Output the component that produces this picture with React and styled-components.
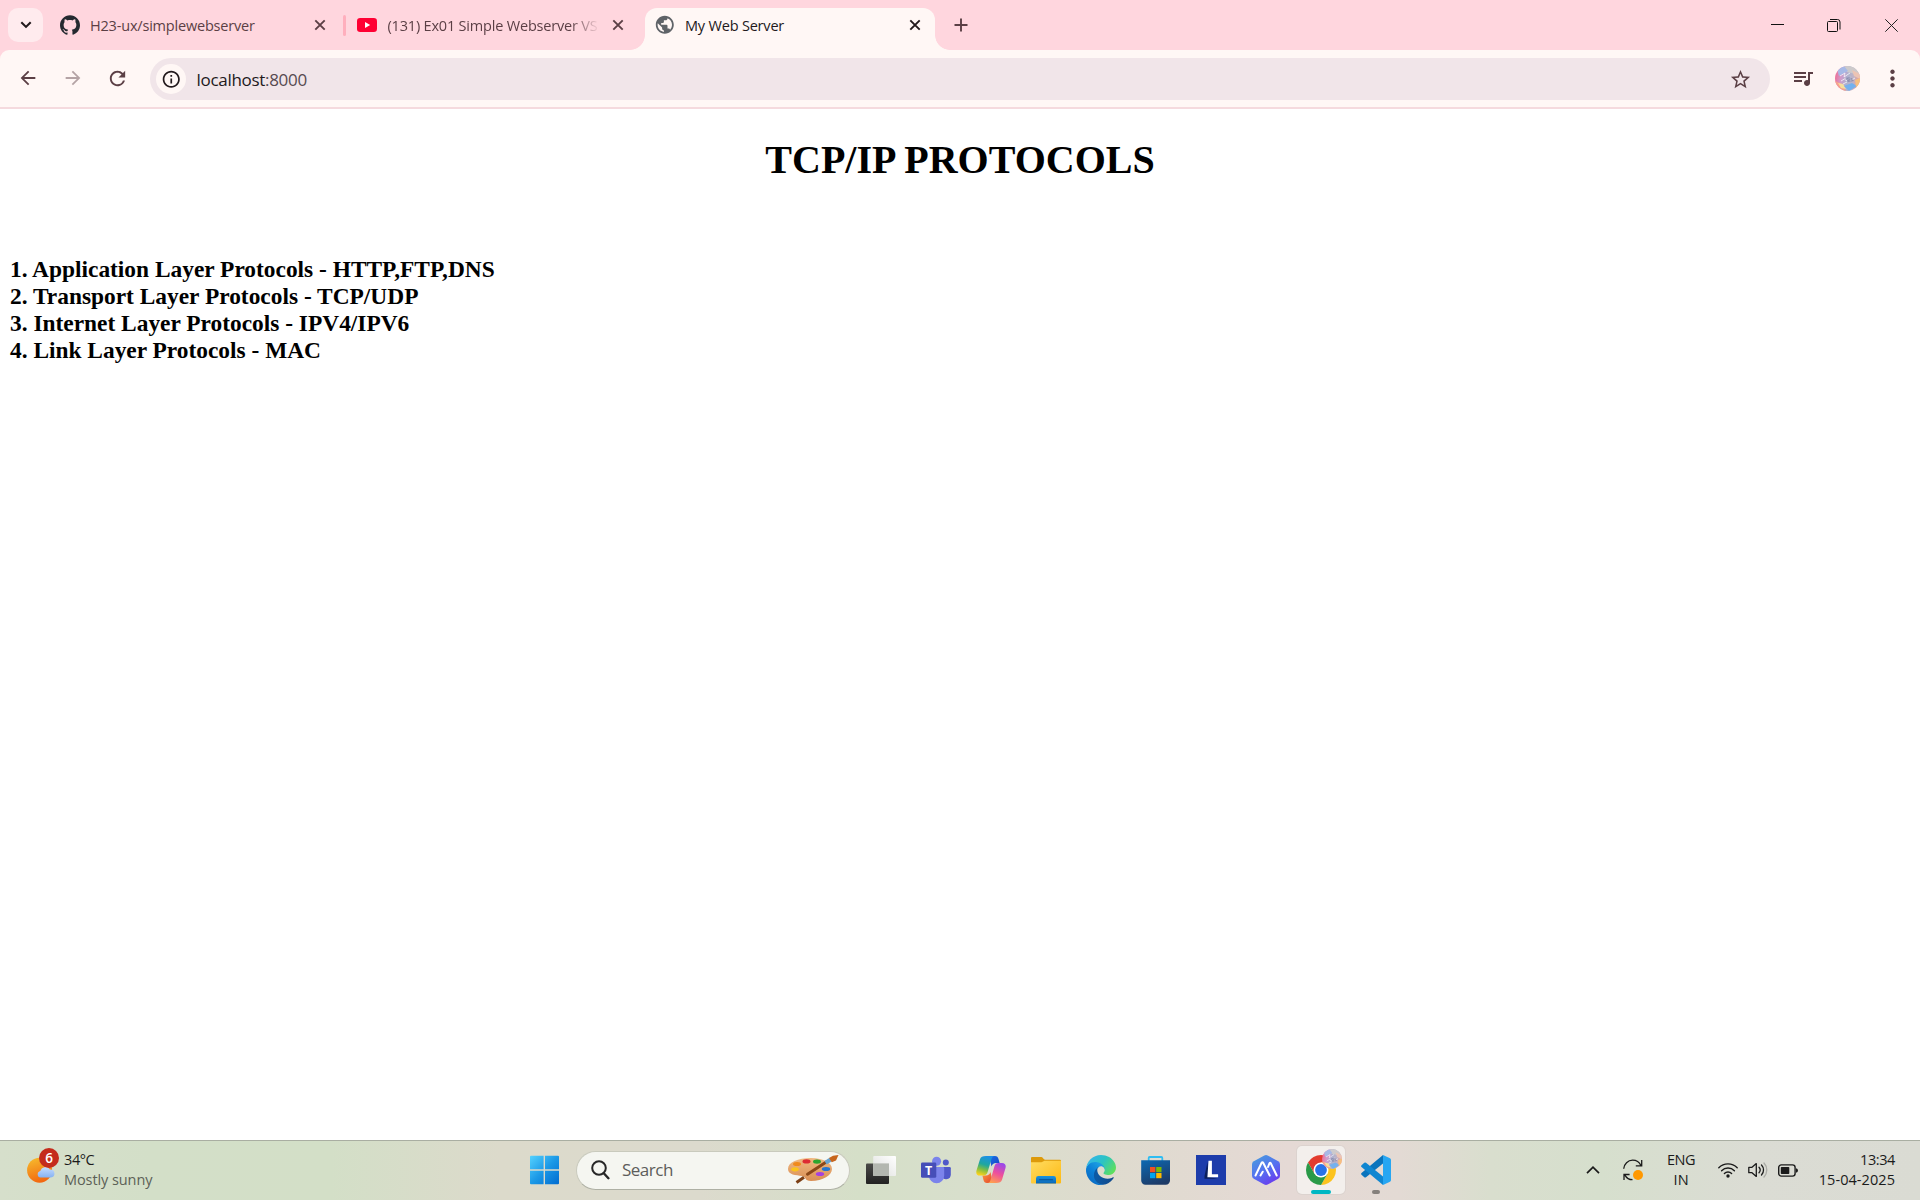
import React from "react";
import styled, { createGlobalStyle, css } from "styled-components";
import { SiGithub } from "react-icons/si";
import {
  MdPublic,
  MdArrowBack,
  MdArrowForward,
  MdRefresh,
  MdInfoOutline,
  MdStarBorder,
  MdQueueMusic,
  MdMoreVert,
} from "react-icons/md";

const colors = {
  frame: "#ffd6de",
  toolbar: "#fff7f5",
  omnibox: "#f1e5e9",
  ink: "#5b3f45",
  dark: "#22191c",
};

const ui = css`
  font-family: "Open Sans", "Noto Sans", sans-serif;
  white-space: nowrap;
`;

const GlobalStyle = createGlobalStyle`
  *, *::before, *::after { box-sizing: border-box; }
  body { margin: 0; background: #fff; overflow: hidden; }
  svg { display: block; flex: none; }
`;

const Screen = styled.div`
  display: flex;
  flex-direction: column;
  width: 1920px;
  height: 1200px;
`;

/* ---------- browser frame ---------- */

const TabStrip = styled.div`
  display: flex;
  align-items: center;
  height: 50px;
  padding-left: 8px;
  background: ${colors.frame};
`;

const TabSearch = styled.div`
  display: flex;
  align-items: center;
  justify-content: center;
  width: 35px;
  height: 34px;
  margin-right: 5px;
  border-radius: 10px;
  background: #ffebee;
`;

const Tab = styled.div`
  position: relative;
  display: flex;
  align-items: center;
  align-self: flex-end;
  width: ${(p) => p.$width}px;
  height: 42.5px;
  padding: 0 ${(p) => p.$right}px 7.5px ${(p) => p.$left}px;
  color: ${(p) => (p.$active ? colors.dark : colors.ink)};

  ${(p) =>
    p.$active &&
    css`
      background: ${colors.toolbar};
      border-radius: 12px 12px 0 0;

      &::before,
      &::after {
        content: "";
        position: absolute;
        bottom: 0;
        width: 15px;
        height: 15px;
      }
      &::before {
        right: 100%;
        background: radial-gradient(circle at 0 0, transparent 14.5px, ${colors.toolbar} 15.2px);
      }
      &::after {
        left: 100%;
        background: radial-gradient(circle at 100% 0, transparent 14.5px, ${colors.toolbar} 15.2px);
      }
    `}
`;

const Favicon = styled.div`
  display: flex;
  align-items: center;
  justify-content: center;
  width: ${(p) => p.$size}px;
  height: 20px;
`;

const TabTitle = styled.div`
  ${ui}
  flex: 1;
  min-width: 0;
  margin: 2px ${(p) => (p.$fade ? 2 : 10)}px 0 ${(p) => p.$gap}px;
  font-size: 14.5px;
  line-height: 20px;
  letter-spacing: -0.19px;
  ${(p) =>
    p.$fade &&
    css`
      mask-image: linear-gradient(90deg, #000 calc(100% - 36px), transparent calc(100% - 6px));
    `}
`;

const Separator = styled.div`
  width: 3px;
  height: 21px;
  border-radius: 2px;
  background: #ffafbd;
`;

const NewTab = styled.div`
  display: flex;
  justify-content: center;
  width: 52px;
`;

const WindowControls = styled.div`
  display: flex;
  gap: 43.5px;
  margin-left: auto;
  padding-right: 22.5px;
`;

const ToolbarFrame = styled.div`
  background: ${colors.frame};
`;

const Toolbar = styled.div`
  display: flex;
  align-items: center;
  height: 59px;
  padding: 0 4px 1px 15px;
  border-bottom: 2px solid #f5dade;
  border-radius: 9px 9px 0 0;
  background: ${colors.toolbar};
`;

const ToolButton = styled.div`
  display: flex;
  align-items: center;
  justify-content: center;
  width: 45px;
  color: ${colors.ink};
  opacity: ${(p) => (p.$disabled ? 0.45 : 1)};
`;

const NavGroup = styled.div`
  display: flex;
  width: 135px;
  margin-left: -10px;
`;

const Omnibox = styled.div`
  display: flex;
  align-items: center;
  flex: none;
  width: 1620px;
  height: 42px;
  margin-left: 10px;
  margin-top: 2px;
  padding: 0 18px 0 6px;
  border-radius: 21px;
  background: ${colors.omnibox};
`;

const SiteInfo = styled.div`
  display: flex;
  align-items: center;
  justify-content: center;
  width: 30px;
  height: 30px;
  border-radius: 50%;
  color: ${colors.dark};
  background: ${colors.toolbar};
`;

const Address = styled.div`
  ${ui}
  flex: 1;
  margin-left: 10.5px;
  padding-top: 1px;
  font-size: 17px;
  line-height: 24px;
  letter-spacing: -0.3px;
  color: ${colors.dark};
`;

const Port = styled.span`
  color: #574a50;
`;

const Actions = styled.div`
  display: flex;
  align-items: center;
  margin-left: 10px;
`;

/* ---------- web page ---------- */

const Page = styled.main`
  flex: 1;
  padding: 27.5px 10px 0;
  background: #fff;
  color: #000;
  font-family: "Liberation Serif", "Times New Roman", serif;
`;

const Heading = styled.h1`
  margin: 0;
  font-size: 40px;
  line-height: 46px;
  text-align: center;
`;

const Protocols = styled.h3`
  margin: 73.5px 0 0;
  font-size: 23.4px;
  line-height: 27px;
`;

/* ---------- taskbar ---------- */

const Taskbar = styled.footer`
  display: flex;
  align-items: center;
  height: 60px;
  padding-bottom: 1px;
  border-top: 1px solid #a9aea2;
  background: linear-gradient(
    90deg,
    #d6dfcb 0,
    #d3dfc8 150px,
    #d3dfc7 330px,
    #dcdacb 500px,
    #dcdacd 700px,
    #d5dfc8 860px,
    #d8dfcc 960px,
    #dedbce 1100px,
    #e5d9d5 1290px,
    #e3dad4 1400px,
    #d9dece 1490px,
    #d6dfcd 1600px,
    #dbdcd4 1750px,
    #dadbd3 1920px
  );
`;

const Weather = styled.div`
  display: flex;
  align-items: center;
  width: 530px;
  padding-left: 27px;
`;

const WeatherIcon = styled.div`
  position: relative;
  width: 32px;
  height: 36px;
  margin-right: 5px;
  margin-top: -9px;
`;

const Badge = styled.div`
  ${ui}
  position: absolute;
  top: 0;
  right: 0;
  width: 20px;
  height: 20px;
  border-radius: 50%;
  background: #c42b1c;
  color: #fff;
  font-size: 13.5px;
  font-weight: 600;
  line-height: 20px;
  text-align: center;
`;

const Lines = styled.div`
  ${ui}
  font-size: 14.5px;
  line-height: 20px;
  color: #1b1b1b;
  text-align: ${(p) => p.$align || "left"};
`;

const Line = styled.div`
  letter-spacing: ${(p) => p.$spacing || 0}px;
  color: ${(p) => (p.$muted ? "#5c6157" : "inherit")};
`;

const SearchBox = styled.div`
  ${ui}
  display: flex;
  align-items: center;
  width: 274px;
  height: 39px;
  margin: 0 3.5px 0 16px;
  padding: 0 10px 0 14px;
  border: 1px solid #c9cabd;
  border-bottom-color: #aeb0a4;
  border-radius: 20px;
  background: #f5f6f1;
  color: #5d5d5b;
  font-size: 17px;
  line-height: 24px;
  letter-spacing: -0.5px;
`;

const SearchLabel = styled.span`
  flex: 1;
  margin-left: 12px;
`;

const AppSlot = styled.div`
  display: flex;
  justify-content: center;
  width: 55px;
`;

const AppButton = styled.div`
  position: relative;
  display: flex;
  align-items: center;
  justify-content: center;
  width: 48px;
  height: 48px;
  border-radius: 5px;
  ${(p) =>
    p.$focused &&
    css`
      background: #f3efec;
      box-shadow: 0 0 0 1px #dcd3cf;
    `}
`;

const Indicator = styled.div`
  position: absolute;
  bottom: 0;
  left: 50%;
  width: ${(p) => (p.$focused ? 20 : 8)}px;
  height: 4px;
  border-radius: 2px;
  background: ${(p) => (p.$focused ? "#00b7c3" : "#85807c")};
  transform: translateX(-50%);
`;

const ProfileBadge = styled.div`
  position: absolute;
  top: 3px;
  right: 3px;
`;

const Tray = styled.div`
  display: flex;
  align-items: center;
  margin-left: auto;
  padding-right: 25px;
`;

const TrayItem = styled.div`
  margin-right: ${(p) => p.$after}px;
`;

/* ---------- drawings ---------- */

const Cross = ({ color }) => (
  <svg width="20" height="20" viewBox="0 0 20 20">
    <path d="M5.3 5.3l9.4 9.4M14.7 5.3l-9.4 9.4" stroke={color} strokeWidth="1.9" />
  </svg>
);

const YouTubeIcon = () => (
  <svg width="20" height="14" viewBox="0 0 20 14">
    <rect width="20" height="14" rx="3.2" fill="#ff0033" />
    <path d="M8 4l5.2 3L8 10z" fill="#fff" />
  </svg>
);

const Avatar = ({ size, id }) => (
  <svg width={size} height={size} viewBox="0 0 25 25">
    <defs>
      <linearGradient id={`${id}-base`} x1="0" y1=".4" x2="1" y2=".6">
        <stop offset="0" stopColor="#ee6f98" />
        <stop offset=".25" stopColor="#cf9ccb" />
        <stop offset=".5" stopColor="#adb2cf" />
        <stop offset=".75" stopColor="#c3b3c4" />
        <stop offset="1" stopColor="#f0988a" />
      </linearGradient>
      <clipPath id={`${id}-clip`}>
        <circle cx="12.5" cy="12.5" r="12.5" />
      </clipPath>
    </defs>
    <g clipPath={`url(#${id}-clip)`}>
      <rect width="25" height="25" fill={`url(#${id}-base)`} />
      <path d="M9 0h16v9L12 6z" fill="#cdcacb" />
      <path d="M2 3l7-3 4 5-9 5z" fill="#a7b9e6" />
      <path d="M17 4l8 4v5l-6-3z" fill="#ecc4b4" />
      <path d="M0 15l7 3 4 7H0z" fill="#f7a08e" />
      <path d="M3 17l5 1 3 5-5-1z" fill="#f6df9d" />
      <path d="M9 20l8-3 5 3-8 5z" fill="#74b1ee" />
      <path d="M20 14l5-2v7l-4 2z" fill="#f6c07f" />
      <path
        d="M5 10l5-3-1 4 6-4M6 15l5-3 0 3 5-4-1 4 5-3M8 18l4-2"
        fill="none"
        stroke="#fff"
        strokeOpacity=".7"
        strokeWidth="1"
      />
      <path d="M10 12l6-1 3 4-6 1z" fill="#5f6390" fillOpacity=".45" />
    </g>
  </svg>
);

const WeatherDrawing = () => (
  <svg width="32" height="36" viewBox="0 0 32 36">
    <defs>
      <linearGradient id="sun" x1=".3" y1="0" x2=".6" y2="1">
        <stop offset="0" stopColor="#f6b82c" />
        <stop offset="1" stopColor="#f2640f" />
      </linearGradient>
      <linearGradient id="cloud" x1="0" y1="0" x2="0" y2="1">
        <stop offset="0" stopColor="#c5dcff" />
        <stop offset="1" stopColor="#86b2f2" />
      </linearGradient>
    </defs>
    <circle cx="12.6" cy="22.2" r="12.5" fill="url(#sun)" />
    <path
      d="M13.600 29.600a3.300 3.300 0 0 1-.3-6.500 5.300 5.300 0 0 1 9.600-1.600 4 4 0 1 1 .9 8.100z"
      fill="url(#cloud)"
    />
  </svg>
);

const WindowsLogo = () => (
  <svg width="30" height="30" viewBox="0 0 30 30">
    <defs>
      <linearGradient id="win" gradientUnits="userSpaceOnUse" x1="0" y1="0" x2="30" y2="30">
        <stop offset="0" stopColor="#55d3ff" />
        <stop offset=".5" stopColor="#1b98e6" />
        <stop offset="1" stopColor="#0069cf" />
      </linearGradient>
    </defs>
    <path
      d="M1 .8h12.600v13.500H0V1.800a1 1 0 0 1 1-1zM15 .8h13a1 1 0 0 1 1 1v12.500H15zM0 15.700h13.600v13.600H1a1 1 0 0 1-1-1zM15 15.700h14v12.600a1 1 0 0 1-1 1H15z"
      fill="url(#win)"
    />
  </svg>
);

const Magnifier = () => (
  <svg width="19" height="20" viewBox="0 0 19 20">
    <circle cx="8" cy="8" r="6.800" fill="none" stroke="#272727" strokeWidth="2" />
    <path d="M12.800 13.200l4.600 5" stroke="#272727" strokeWidth="2.400" strokeLinecap="round" />
  </svg>
);

const Palette = () => (
  <svg width="52" height="30" viewBox="0 0 52 30">
    <defs>
      <linearGradient id="wood" x1="0" y1="0" x2="0" y2="1">
        <stop offset="0" stopColor="#f0b981" />
        <stop offset="1" stopColor="#d98f55" />
      </linearGradient>
    </defs>
    <path
      d="M1 14C1 7 11 3 24 3s21 5 21 11-9 12-21 12c-7 0-4-4-9-5C9 20 1 20 1 14z"
      fill="url(#wood)"
    />
    <ellipse cx="10" cy="9" rx="4" ry="2.100" fill="#f08a1c" />
    <ellipse cx="19.500" cy="6.400" rx="4" ry="2.100" fill="#dd2b32" />
    <ellipse cx="30" cy="6.600" rx="4" ry="2.200" fill="#2ba52f" />
    <ellipse cx="8" cy="14.300" rx="3.800" ry="2.100" fill="#fbc31c" />
    <ellipse cx="39" cy="14" rx="4.200" ry="2.100" fill="#2676cf" />
    <ellipse cx="33" cy="19" rx="4.200" ry="2.100" fill="#a440e0" />
    <path d="M9.500 27.500L17 22.300" stroke="#7c3f16" strokeWidth="3" />
    <path d="M20.500 19.200L40 6.500" stroke="#8a4719" strokeWidth="3" strokeLinecap="round" />
    <path d="M37.500 6l5-3.200 2.800 3.200-5.600 3.500z" fill="#6aa4cf" />
    <path d="M42 3l4-2.200L51.500 0 49 5.500l-4.200 1.800z" fill="#c7651d" />
  </svg>
);

const TaskView = () => (
  <svg width="30" height="30" viewBox="0 0 30 30">
    <defs>
      <linearGradient id="tv" x1="0" y1="0" x2="0" y2="1">
        <stop offset="0" stopColor="#4a4a48" />
        <stop offset="1" stopColor="#222" />
      </linearGradient>
      <linearGradient id="tw" x1="1" y1="0" x2="0" y2="1">
        <stop offset="0" stopColor="#fff" />
        <stop offset="1" stopColor="#dcdedb" />
      </linearGradient>
    </defs>
    <rect x="0" y="8.400" width="23" height="20.600" rx="1" fill="url(#tv)" />
    <rect x="7.200" y="1" width="22.800" height="20" rx="1" fill="url(#tw)" />
    <rect x="7.200" y="8.400" width="15.800" height="12.600" fill="#b3b7b0" />
  </svg>
);

const TeamsLetter = styled.span`
  ${ui}
  position: absolute;
  left: 9px;
  top: 15.500px;
  width: 15px;
  color: #fff;
  font-size: 12.500px;
  font-weight: 700;
  line-height: 17px;
  text-align: center;
`;

const Teams = () => (
  <>
    <svg width="30" height="30" viewBox="0 0 30 30">
      <circle cx="24.800" cy="7.400" r="3" fill="#5059c9" />
      <path d="M21 12h7.600a1.200 1.200 0 0 1 1.200 1.200v6.300a4.800 4.800 0 0 1-8.800 2.600z" fill="#5059c9" />
      <circle cx="15.600" cy="6.300" r="4.500" fill="#7b83eb" />
      <path d="M9 12h13a1.200 1.200 0 0 1 1.200 1.200v7.500a7.600 7.600 0 0 1-15.200 0z" fill="#7b83eb" />
      <rect x="0" y="7.600" width="15.300" height="15.200" rx="1.400" fill="#464eb8" />
    </svg>
    <TeamsLetter>T</TeamsLetter>
  </>
);

const Copilot = () => (
  <svg width="30" height="30" viewBox="0 0 30 30">
    <defs>
      <linearGradient id="cpA" x1=".6" y1="0" x2=".3" y2="1">
        <stop offset="0" stopColor="#1b8fe8" />
        <stop offset=".45" stopColor="#1fa79f" />
        <stop offset=".7" stopColor="#7dbd45" />
        <stop offset="1" stopColor="#fbd21a" />
      </linearGradient>
      <linearGradient id="cpB" x1=".7" y1="0" x2=".3" y2="1">
        <stop offset="0" stopColor="#9a48ea" />
        <stop offset=".5" stopColor="#ee4f9c" />
        <stop offset="1" stopColor="#ffa04f" />
      </linearGradient>
      <linearGradient id="cpC" x1="0" y1="0" x2="1" y2="1">
        <stop offset="0" stopColor="#1d6fe6" />
        <stop offset="1" stopColor="#1346c4" />
      </linearGradient>
      <linearGradient id="cpD" x1="0" y1="0" x2="1" y2="1">
        <stop offset="0" stopColor="#ff9a3d" />
        <stop offset="1" stopColor="#e0432f" />
      </linearGradient>
    </defs>
    <path d="M13 1h6c2 0 3 1.200 3.500 3L23.600 8H20c-2.500 0-3.800 1.200-4.500 3.500z" fill="url(#cpC)" />
    <path d="M17 28h-6c-2 0-3-1.200-3.500-3L6.400 20.500H10c2.500 0 3.800-1.200 4.500-3.500z" fill="url(#cpD)" />
    <path
      d="M10 1h9c-2 0-3 1.200-3.600 3.300l-3.700 12.500c-.8 2.600-2 3.700-4.200 3.700H4c-3 0-4.300-2-3.500-5L4 4.200C4.700 2 6.500 1 10 1z"
      fill="url(#cpA)"
    />
    <path
      d="M20 28h-9c2 0 3-1.200 3.600-3.300l3.700-13C19.100 9.100 20.300 8 22.500 8H26c3 0 4.300 2 3.500 5L26 24.800c-.7 2.200-2.500 3.200-6 3.200z"
      fill="url(#cpB)"
    />
  </svg>
);

const Folder = () => (
  <svg width="30" height="30" viewBox="0 0 30 30">
    <defs>
      <linearGradient id="fo" x1="0" y1="0" x2="1" y2="1">
        <stop offset="0" stopColor="#ffdc62" />
        <stop offset="1" stopColor="#fdb913" />
      </linearGradient>
      <linearGradient id="fb" x1="0" y1="0" x2="0" y2="1">
        <stop offset="0" stopColor="#1b93de" />
        <stop offset="1" stopColor="#0a67b8" />
      </linearGradient>
    </defs>
    <path d="M1 2h9.500c1.500 0 2 2.800 3.500 2.800h15a1 1 0 0 1 1 1V10H0V3a1 1 0 0 1 1-1z" fill="#dd9a0b" />
    <path d="M0 7.200h10.500l3-1.500H30V27.500a1 1 0 0 1-1 1H1a1 1 0 0 1-1-1z" fill="url(#fo)" />
    <path d="M5 28.500V23.400a2.400 2.400 0 0 1 2.400-2.400h15.200a2.400 2.400 0 0 1 2.400 2.400v5.100z" fill="url(#fb)" />
    <path d="M8.500 24.700h13" stroke="#0a4f94" strokeWidth="1.100" strokeLinecap="round" />
  </svg>
);

const Edge = () => (
  <svg width="30" height="30" viewBox="0 0 256 256">
    <defs>
      <linearGradient id="edA" x1=".2" y1=".5" x2="1" y2=".6">
        <stop offset="0" stopColor="#0c59a4" />
        <stop offset="1" stopColor="#114a8b" />
      </linearGradient>
      <linearGradient id="edB" x1=".9" y1=".3" x2=".4" y2="1">
        <stop offset="0" stopColor="#1b9de2" />
        <stop offset=".5" stopColor="#0b7fd6" />
        <stop offset="1" stopColor="#0a6cc4" />
      </linearGradient>
      <linearGradient id="edC" x1="0" y1=".2" x2="1" y2=".7">
        <stop offset="0" stopColor="#35b4ee" />
        <stop offset=".5" stopColor="#2cc3c4" />
        <stop offset="1" stopColor="#5fe05a" />
      </linearGradient>
    </defs>
    <path
      d="M231 190.500c-3.400 1.800-6.900 3.400-10.500 4.700-11.500 4.300-23.600 6.500-35.900 6.500-47.300 0-88.500-32.500-88.500-74.300.1-11.400 6.400-21.900 16.400-27.300-42.800 1.800-53.800 46.400-53.800 72.500 0 74 68.100 81.400 82.800 81.400 7.900 0 19.800-2.300 27-4.600l1.300-.4c27.600-9.500 51-28.100 66.600-52.800 1.200-1.900.6-4.300-1.200-5.500-1.300-.8-2.900-.9-4.200-.2z"
      fill="url(#edA)"
    />
    <path
      d="M105.700 241.400c-8.900-5.500-16.600-12.800-22.700-21.300-26.300-36-18.400-86.500 17.600-112.800 3.800-2.700 7.700-5.200 11.900-7.200 3.100-1.500 8.400-4.100 15.500-4 10.100.1 19.600 4.900 25.700 13 4 5.400 6.300 11.900 6.400 18.700 0-.2 24.500-79.600-80-79.600-43.900 0-80 41.700-80 78.200-.2 19.300 4 38.500 12.100 56 27.600 58.800 94.800 87.600 156.400 67.100-21.100 6.600-44.100 3.700-62.900-8.100z"
      fill="url(#edB)"
    />
    <path
      d="M152.300 148.900c-.9 1-3.400 2.500-3.400 5.600 0 2.600 1.700 5.200 4.800 7.300 14.300 10 41.400 8.600 41.500 8.600 10.700 0 21.100-2.900 30.300-8.300 18.800-11 30.400-31.100 30.400-52.900.3-22.400-8-37.300-11.300-43.900C223.500 23.900 177.700 0 128 0 58.100 0 1 56.200.2 126.200c.5-36.500 36.800-66 80-66 3.500 0 23.500.3 42 10.100 16.300 8.600 24.900 18.900 30.800 29.200 6.200 10.700 7.300 24.100 7.300 29.500 0 5.300-2.700 13.300-7.800 19.900z"
      fill="url(#edC)"
    />
  </svg>
);

const Store = () => (
  <svg width="30" height="30" viewBox="0 0 30 30">
    <defs>
      <linearGradient id="st" x1=".2" y1="0" x2=".6" y2="1">
        <stop offset="0" stopColor="#0d66ae" />
        <stop offset="1" stopColor="#1d3a66" />
      </linearGradient>
    </defs>
    <path d="M7.700 6V3a1 1 0 0 1 1-1h11.600a1 1 0 0 1 1 1v3" fill="none" stroke="#2fbdf2" strokeWidth="1.800" />
    <path d="M.2 5.200H29V25.500a4.200 4.200 0 0 1-4.200 4.200H4.400a4.200 4.200 0 0 1-4.200-4.200z" fill="url(#st)" />
    <rect x="9" y="12" width="5.300" height="5.200" fill="#f25022" />
    <rect x="15.200" y="12" width="5.300" height="5.200" fill="#7fba00" />
    <rect x="9" y="18" width="5.300" height="5.200" fill="#00a4ef" />
    <rect x="15.200" y="18" width="5.300" height="5.200" fill="#ffb900" />
  </svg>
);

const BlockL = () => (
  <svg width="30" height="30" viewBox="0 0 30 30">
    <rect width="30" height="30" fill="#1d3cab" />
    <path d="M11.500 7L8.500 21v2.800H22L12.500 22z" fill="#0b1f5c" />
    <path d="M12.500 5.800h3.400v13.400h6.200v3H11.400z" fill="#fff" />
  </svg>
);

const Hexagon = () => (
  <svg width="30" height="30" viewBox="0 0 30 30">
    <defs>
      <linearGradient id="hx" x1=".2" y1="0" x2=".8" y2="1">
        <stop offset="0" stopColor="#4a9ade" />
        <stop offset=".5" stopColor="#5570f0" />
        <stop offset="1" stopColor="#6d35ee" />
      </linearGradient>
    </defs>
    <path
      d="M13.300.5q1.700-.9 3.400 0L27.200 6.200Q29 7.200 29 9.200V20.800q0 2-1.800 3L16.700 29.500q-1.700.9-3.400 0L2.800 23.800Q1 22.800 1 20.800V9.200q0-2 1.800-3z"
      fill="url(#hx)"
    />
    <path
      d="M4.500 20.500L10.500 8q.9-1.600 1.800 0L18.700 20.500M9.500 20.500l2.200-3.800M17 12l1.400-3.500q.7-1.400 1.500 0L25.700 20.500"
      fill="none"
      stroke="#fff"
      strokeWidth="2"
      strokeLinecap="round"
    />
  </svg>
);

const Chrome = () => (
  <svg width="30" height="30" viewBox="0 0 30 30">
    <path d="M2.010 7.500A15 15 0 0 1 27.990 7.500H15L8.500 18.750z" fill="#e33b2e" />
    <path d="M27.990 7.500A15 15 0 0 1 15 30l6.500-11.250L15 7.500z" fill="#fcc31e" />
    <path d="M15 30A15 15 0 0 1 2.010 7.500L8.500 18.750h13z" fill="#2a9a48" />
    <circle cx="15" cy="15" r="7.500" fill="#fff" />
    <circle cx="15" cy="15" r="5.900" fill="#2a72e8" />
  </svg>
);

const VSCode = () => (
  <svg width="30" height="30" viewBox="0 0 30 30">
    <path d="M22 0v8.600L5 22.200q-.9.600-1.700 0L.5 19.800q-.8-1 0-1.900z" fill="#0a74bd" />
    <path d="M22 30v-8.600L5 7.800q-.9-.6-1.700 0L.5 10.200q-.8 1 0 1.900z" fill="#0f86d1" />
    <path d="M22 0l7 3.200q1 .6 1 1.800v20q0 1.200-1 1.800L22 30z" fill="#27a6f2" />
  </svg>
);

const SyncIcon = () => (
  <svg width="20" height="22" viewBox="0 0 20 22">
    <g fill="none" stroke="#1b1b1b" strokeWidth="1.300">
      <path d="M.7 9.800C1 5 5 1.200 9.600 1.200c3.800 0 6.800 2 8.300 5.300M18.700 1v5.800h-5.900" />
      <path d="M9.500 20.700c-3.500 0-6-1.700-7.600-4.600M1 21v-5.500h5.600" />
    </g>
    <circle cx="15" cy="16" r="5" fill="#ff9800" />
  </svg>
);

const WifiIcon = () => (
  <svg width="20" height="16" viewBox="0 0 20 16">
    <g fill="none" stroke="#1b1b1b" strokeWidth="1.400" strokeLinecap="round">
      <path d="M.8 5.700a13 13 0 0 1 18.400 0" />
      <path d="M3.600 8.700a9 9 0 0 1 12.800 0" />
      <path d="M6.400 11.500a5.100 5.100 0 0 1 7.200 0" />
    </g>
    <circle cx="10" cy="14" r="1.700" fill="#1b1b1b" />
  </svg>
);

const VolumeIcon = () => (
  <svg width="20" height="16" viewBox="0 0 20 16">
    <g fill="none" stroke="#1b1b1b" strokeWidth="1.300" strokeLinecap="round" strokeLinejoin="round">
      <path d="M.8 5.300H4L8.300 1.600v12.800L4 10.700H.8z" />
      <path d="M11 5.300a4 4 0 0 1 0 5.400M13.500 3a7.200 7.200 0 0 1 0 10" />
      <path d="M16 1a10.200 10.200 0 0 1 0 14" opacity=".25" />
    </g>
  </svg>
);

const BatteryIcon = () => (
  <svg width="20" height="13" viewBox="0 0 20 13">
    <rect x=".7" y=".9" width="16.400" height="11.200" rx="2.600" fill="none" stroke="#1b1b1b" strokeWidth="1.400" />
    <rect x="2.800" y="3" width="8.500" height="7" rx=".8" fill="#1b1b1b" />
    <path d="M18 4.300q2 .3 2 2.200t-2 2.200z" fill="#1b1b1b" />
  </svg>
);

const apps = [
  { name: "taskview", Icon: TaskView },
  { name: "teams", Icon: Teams },
  { name: "copilot", Icon: Copilot },
  { name: "explorer", Icon: Folder },
  { name: "edge", Icon: Edge },
  { name: "store", Icon: Store },
  { name: "l", Icon: BlockL },
  { name: "hexagon", Icon: Hexagon },
  { name: "chrome", Icon: Chrome, focused: true, running: true, profile: true },
  { name: "vscode", Icon: VSCode, running: true },
];

const protocols = [
  "1. Application Layer Protocols - HTTP,FTP,DNS",
  "2. Transport Layer Protocols - TCP/UDP",
  "3. Internet Layer Protocols - IPV4/IPV6",
  "4. Link Layer Protocols - MAC",
];

export default function App() {
  return (
    <Screen>
      <GlobalStyle />
      <TabStrip>
        <TabSearch>
          <svg width="12" height="8" viewBox="0 0 12 8">
            <path d="M1.300 1.300L6 5.900l4.700-4.600" fill="none" stroke={colors.dark} strokeWidth="2.100" />
          </svg>
        </TabSearch>
        <Tab $width={295} $left={12} $right={13}>
          <Favicon $size={20}>
            <SiGithub size={20} color="#24292f" />
          </Favicon>
          <TabTitle $gap={10}>H23-ux/simplewebserver</TabTitle>
          <Cross color={colors.ink} />
        </Tab>
        <Separator />
        <Tab $width={299} $left={11} $right={17.5}>
          <Favicon $size={20}>
            <YouTubeIcon />
          </Favicon>
          <TabTitle $gap={10.5} $fade>
            (131) Ex01 Simple Webserver VS
          </TabTitle>
          <Cross color={colors.ink} />
        </Tab>
        <Tab $width={290} $left={11} $right={10} $active>
          <Favicon $size={18}>
            <MdPublic size={21.6} color="#5f6368" />
          </Favicon>
          <TabTitle $gap={11}>My Web Server</TabTitle>
          <Cross color={colors.dark} />
        </Tab>
        <NewTab>
          <svg width="14" height="14" viewBox="0 0 14 14">
            <path d="M7 .5v13M.5 7h13" stroke={colors.ink} strokeWidth="1.900" />
          </svg>
        </NewTab>
        <WindowControls>
          <svg width="13" height="13" viewBox="0 0 13 13">
            <path d="M0 5.500h13" stroke="#111" />
          </svg>
          <svg width="14" height="13" viewBox="0 0 14 13">
            <rect x=".5" y="2.500" width="10" height="10" rx="1" fill="none" stroke="#111" />
            <path d="M3 .5h7.500a2.500 2.500 0 0 1 2.500 2.500v7.500" fill="none" stroke="#111" />
          </svg>
          <svg width="13" height="13" viewBox="0 0 13 13">
            <path d="M.3.3l12.400 12.400M12.700.3L.3 12.700" stroke="#222" />
          </svg>
        </WindowControls>
      </TabStrip>

      <ToolbarFrame>
        <Toolbar>
          <NavGroup>
            <ToolButton>
              <MdArrowBack size={22} />
            </ToolButton>
            <ToolButton $disabled>
              <MdArrowForward size={22} />
            </ToolButton>
            <ToolButton>
              <MdRefresh size={23} />
            </ToolButton>
          </NavGroup>
          <Omnibox>
            <SiteInfo>
              <MdInfoOutline size={20.5} />
            </SiteInfo>
            <Address>
              localhost<Port>:8000</Port>
            </Address>
            <MdStarBorder size={23} color={colors.ink} />
          </Omnibox>
          <Actions>
            <ToolButton>
              <MdQueueMusic size={24} />
            </ToolButton>
            <ToolButton>
              <Avatar size={25} id="toolbar" />
            </ToolButton>
            <ToolButton>
              <MdMoreVert size={27} />
            </ToolButton>
          </Actions>
        </Toolbar>
      </ToolbarFrame>

      <Page>
        <Heading>TCP/IP PROTOCOLS</Heading>
        <Protocols>
          {protocols.map((text) => (
            <div key={text}>{text}</div>
          ))}
        </Protocols>
      </Page>

      <Taskbar>
        <Weather>
          <WeatherIcon>
            <WeatherDrawing />
            <Badge>6</Badge>
          </WeatherIcon>
          <Lines>
            <Line $spacing={-0.4}>34°C</Line>
            <Line $muted $spacing={-0.08}>
              Mostly sunny
            </Line>
          </Lines>
        </Weather>
        <WindowsLogo />
        <SearchBox>
          <Magnifier />
          <SearchLabel>Search</SearchLabel>
          <Palette />
        </SearchBox>
        {apps.map(({ name, Icon, focused, running, profile }) => (
          <AppSlot key={name}>
            <AppButton $focused={focused}>
              <Icon />
              {profile && (
                <ProfileBadge>
                  <Avatar size={20} id="taskbar" />
                </ProfileBadge>
              )}
              {running && <Indicator $focused={focused} />}
            </AppButton>
          </AppSlot>
        ))}
        <Tray>
          <TrayItem $after={23}>
            <svg width="14" height="8" viewBox="0 0 14 8">
              <path d="M1 7.200l6-6 6 6" fill="none" stroke="#1b1b1b" strokeWidth="1.700" />
            </svg>
          </TrayItem>
          <TrayItem $after={24}>
            <SyncIcon />
          </TrayItem>
          <TrayItem $after={23}>
            <Lines $align="center">
              <Line $spacing={-0.4}>ENG</Line>
              <Line>IN</Line>
            </Lines>
          </TrayItem>
          <TrayItem $after={10}>
            <WifiIcon />
          </TrayItem>
          <TrayItem $after={10}>
            <VolumeIcon />
          </TrayItem>
          <TrayItem $after={20.5}>
            <BatteryIcon />
          </TrayItem>
          <Lines $align="right">
            <Line $spacing={-0.4}>13:34</Line>
            <Line $spacing={0.06}>15-04-2025</Line>
          </Lines>
        </Tray>
      </Taskbar>
    </Screen>
  );
}
